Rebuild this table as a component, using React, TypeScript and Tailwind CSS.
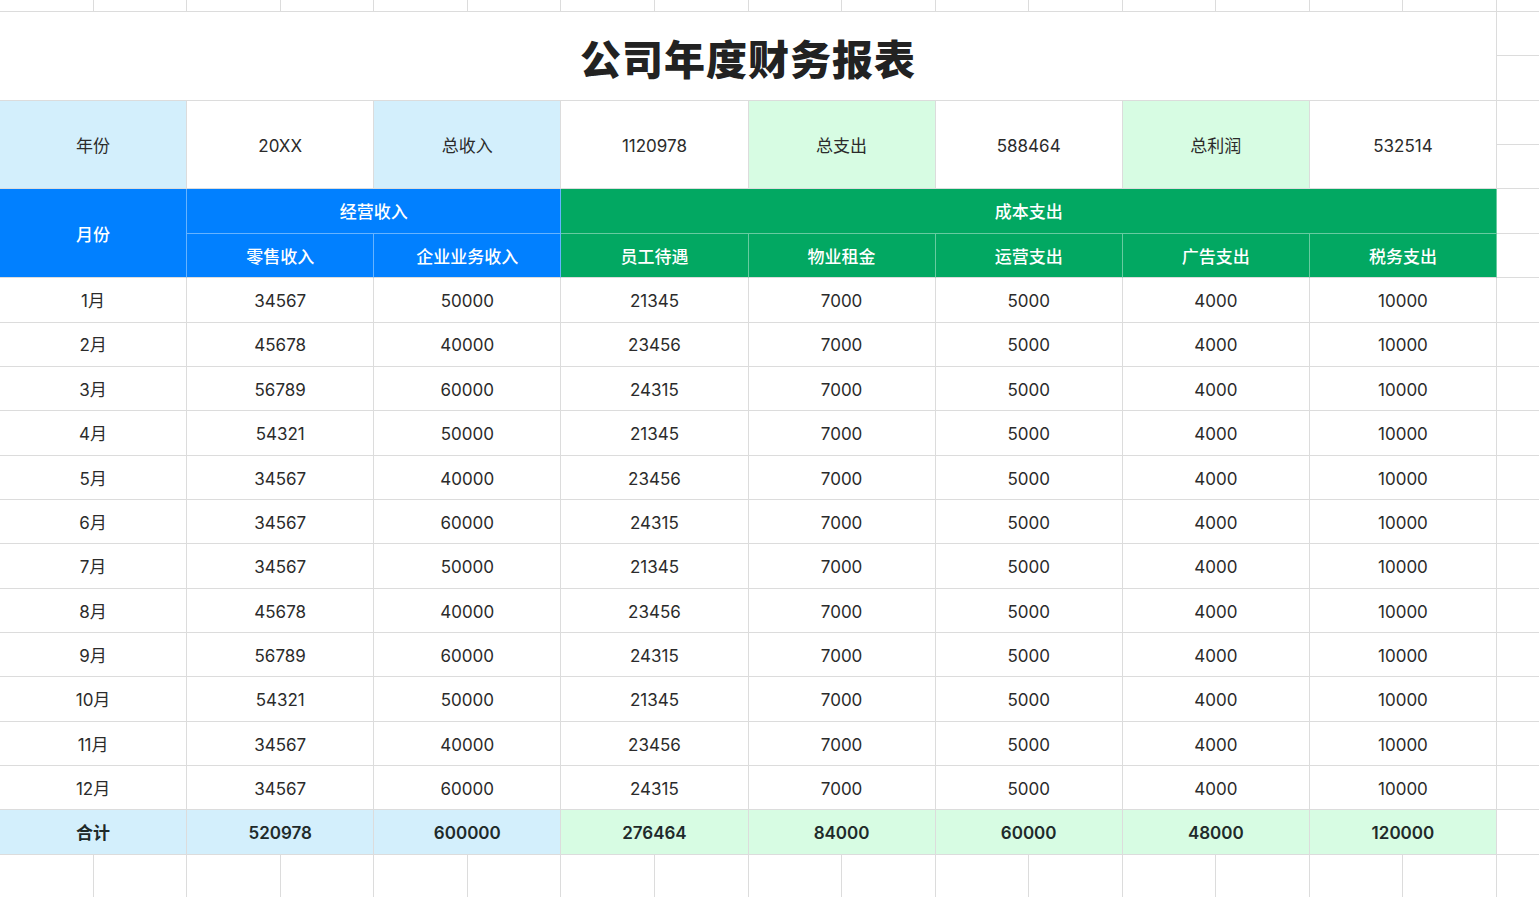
const months = [
  ['1月', 34567, 50000, 21345],
  ['2月', 45678, 40000, 23456],
  ['3月', 56789, 60000, 24315],
  ['4月', 54321, 50000, 21345],
  ['5月', 34567, 40000, 23456],
  ['6月', 34567, 60000, 24315],
  ['7月', 34567, 50000, 21345],
  ['8月', 45678, 40000, 23456],
  ['9月', 56789, 60000, 24315],
  ['10月', 54321, 50000, 21345],
  ['11月', 34567, 40000, 23456],
  ['12月', 34567, 60000, 24315],
] as const

const line = 'border-r border-b border-[#dcdcdc]'
const center = 'flex items-center justify-center pt-[4px]'

function Blank({ edge }: { edge?: boolean }) {
  return <div className={edge ? 'border-b border-[#dcdcdc]' : line} />
}

function Cell({ children, className = '' }: { children?: React.ReactNode; className?: string }) {
  return <div className={`${line} ${center} col-span-2 ${className}`}>{children}</div>
}

export default function App() {
  const info: [string, string][] = [
    ['年份', 'bg-[#d3effc]'],
    ['20XX', 'bg-white'],
    ['总收入', 'bg-[#d3effc]'],
    ['1120978', 'bg-white'],
    ['总支出', 'bg-[#d7fce3]'],
    ['588464', 'bg-white'],
    ['总利润', 'bg-[#d7fce3]'],
    ['532514', 'bg-white'],
  ]
  const totals = ['520978', '600000', '276464', '84000', '60000', '48000', '120000']

  return (
    <div
      className="h-screen w-full overflow-hidden bg-white text-[17px] text-[#2b2b2b]"
      style={{ fontFamily: 'Inter, "Noto Sans CJK SC", sans-serif' }}
    >
      <div className="grid grid-cols-[repeat(16,93.5625px)_1fr] grid-rows-[12px] auto-rows-[44.37px]">
        {/* partial top row */}
        {Array.from({ length: 16 }).map((_, i) => (
          <Blank key={`t${i}`} />
        ))}
        <Blank edge />

        {/* title */}
        <div className={`${line} flex items-center justify-center col-span-16 row-span-2 pt-[9px] text-[41px] font-black tracking-[1px] text-[#222]`}>
          公司年度财务报表
        </div>
        <Blank edge />
        <Blank edge />

        {/* summary */}
        {info.map(([t, bg]) => (
          <Cell key={t} className={`row-span-2 ${bg}`}>{t}</Cell>
        ))}
        <Blank edge />
        <Blank edge />

        {/* header */}
        <div className={`${center} col-span-2 row-span-2 border-r border-b border-r-white/40 border-b-[#dcdcdc] bg-[#0180ff] font-medium text-white`}>
          月份
        </div>
        <div className={`${center} col-span-4 border-r border-b border-white/40 bg-[#0180ff] font-medium text-white`}>
          经营收入
        </div>
        <div className={`${center} col-span-10 border-r border-b border-white/40 bg-[#02a862] font-medium text-white`}>
          成本支出
        </div>
        <Blank edge />
        {['零售收入', '企业业务收入'].map((t) => (
          <div key={t} className={`${center} col-span-2 border-r border-b border-r-white/40 border-b-[#dcdcdc] bg-[#0180ff] font-medium text-white`}>
            {t}
          </div>
        ))}
        {['员工待遇', '物业租金', '运营支出', '广告支出', '税务支出'].map((t) => (
          <div key={t} className={`${center} col-span-2 border-r border-b border-r-white/40 border-b-[#dcdcdc] bg-[#02a862] font-medium text-white`}>
            {t}
          </div>
        ))}
        <Blank edge />

        {/* months */}
        {months.map(([m, a, b, c]) => [
          <Cell key={`${m}m`}>{m}</Cell>,
          <Cell key={`${m}a`}>{a}</Cell>,
          <Cell key={`${m}b`}>{b}</Cell>,
          <Cell key={`${m}c`}>{c}</Cell>,
          <Cell key={`${m}d`}>7000</Cell>,
          <Cell key={`${m}e`}>5000</Cell>,
          <Cell key={`${m}f`}>4000</Cell>,
          <Cell key={`${m}g`}>10000</Cell>,
          <Blank key={`${m}x`} edge />,
        ])}

        {/* totals */}
        <Cell className="bg-[#d3effc] font-semibold text-[#1e2a2a]">合计</Cell>
        {totals.map((t, i) => (
          <Cell key={i} className={`${i < 2 ? 'bg-[#d3effc]' : 'bg-[#d7fce3]'} font-semibold text-[#1e2a2a]`}>
            {t}
          </Cell>
        ))}
        <Blank edge />

        {/* trailing row */}
        {Array.from({ length: 16 }).map((_, i) => (
          <Blank key={`b${i}`} />
        ))}
        <Blank edge />
      </div>
    </div>
  )
}
